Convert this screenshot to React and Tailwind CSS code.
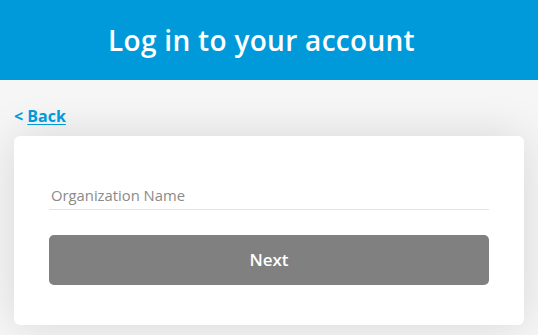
import React, { useState } from "react";

export default function App() {
  const [org, setOrg] = useState("");

  return (
    <div className="min-h-[335px] bg-[#f6f6f6] font-['Open_Sans',sans-serif]">
      {/* Header */}
      <div className="h-20 bg-[#0099d9] flex items-center justify-center pr-[15px]">
        <h1 className="text-[28px] font-semibold text-white tracking-[0.3px]">
          Log in to your account
        </h1>
      </div>

      <div className="px-[14px] pt-[24px]">
        {/* Back link */}
        <a href="#" className="text-[16px] font-bold text-[#0099d9] leading-[20px]">
          &lt; <span className="underline underline-offset-2">Back</span>
        </a>

        {/* Card */}
        <div className="mt-[8px] bg-white rounded-md shadow-[0_0_45px_rgba(0,0,0,0.13)] px-[35px] pt-[44px] pb-[40px]">
          <input
            type="text"
            value={org}
            onChange={(e) => setOrg(e.target.value)}
            placeholder="Organization Name"
            className="w-full h-[30px] px-[2px] border-b border-[#e2e2e2] text-[14.8px] text-[#555] placeholder-[#8a8a8a] outline-none"
          />
          <button className="mt-[25px] w-full h-[50px] rounded-[5px] bg-[#808080] text-white text-[17px] font-semibold">
            Next
          </button>
        </div>
      </div>
    </div>
  );
}
